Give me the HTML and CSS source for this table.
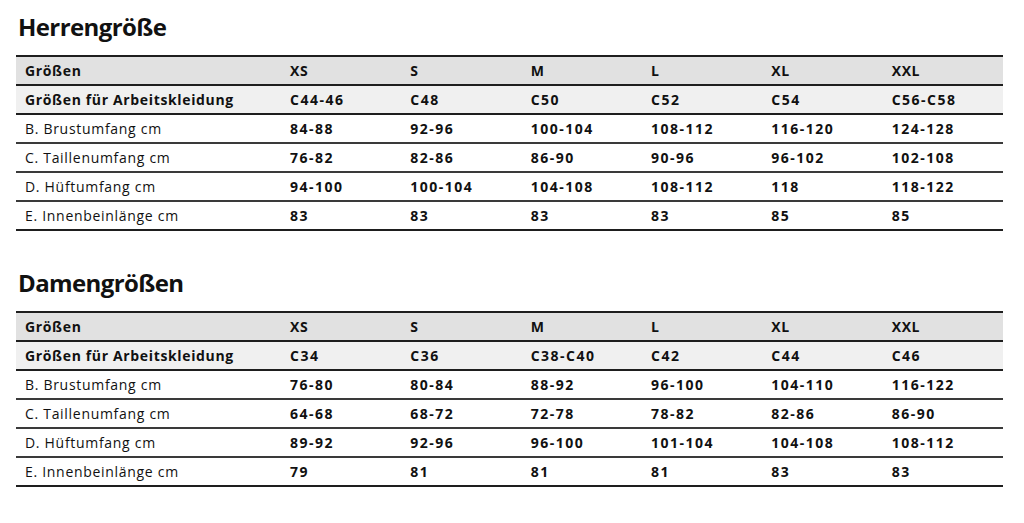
FILE: index.html
```html
<!DOCTYPE html>
<html lang="de">
<head>
<meta charset="utf-8">
<title>Größentabelle</title>
<link rel="stylesheet" href="styles.css">
</head>
<body>
<section class="block">
  <h2 class="title">Herrengröße</h2>
  <table class="sizes">
    <colgroup><col class="c-label"><col><col><col><col><col><col></colgroup>
    <tr class="r-head"><th>Größen</th><th>XS</th><th>S</th><th>M</th><th>L</th><th>XL</th><th>XXL</th></tr>
    <tr class="r-work"><th>Größen für Arbeitskleidung</th><td>C44-46</td><td>C48</td><td>C50</td><td>C52</td><td>C54</td><td>C56-C58</td></tr>
    <tr><th>B. Brustumfang cm</th><td>84-88</td><td>92-96</td><td>100-104</td><td>108-112</td><td>116-120</td><td>124-128</td></tr>
    <tr><th>C. Taillenumfang cm</th><td>76-82</td><td>82-86</td><td>86-90</td><td>90-96</td><td>96-102</td><td>102-108</td></tr>
    <tr><th>D. Hüftumfang cm</th><td>94-100</td><td>100-104</td><td>104-108</td><td>108-112</td><td>118</td><td>118-122</td></tr>
    <tr class="r-last"><th>E. Innenbeinlänge cm</th><td>83</td><td>83</td><td>83</td><td>83</td><td>85</td><td>85</td></tr>
  </table>
</section>
<section class="block block-2">
  <h2 class="title">Damengrößen</h2>
  <table class="sizes">
    <colgroup><col class="c-label"><col><col><col><col><col><col></colgroup>
    <tr class="r-head"><th>Größen</th><th>XS</th><th>S</th><th>M</th><th>L</th><th>XL</th><th>XXL</th></tr>
    <tr class="r-work"><th>Größen für Arbeitskleidung</th><td>C34</td><td>C36</td><td>C38-C40</td><td>C42</td><td>C44</td><td>C46</td></tr>
    <tr><th>B. Brustumfang cm</th><td>76-80</td><td>80-84</td><td>88-92</td><td>96-100</td><td>104-110</td><td>116-122</td></tr>
    <tr><th>C. Taillenumfang cm</th><td>64-68</td><td>68-72</td><td>72-78</td><td>78-82</td><td>82-86</td><td>86-90</td></tr>
    <tr><th>D. Hüftumfang cm</th><td>89-92</td><td>92-96</td><td>96-100</td><td>101-104</td><td>104-108</td><td>108-112</td></tr>
    <tr class="r-last"><th>E. Innenbeinlänge cm</th><td>79</td><td>81</td><td>81</td><td>81</td><td>83</td><td>83</td></tr>
  </table>
</section>
</body>
</html>
```

FILE: styles.css
```css
html, body {
  margin: 0;
  padding: 0;
  background: #ffffff;
}
body {
  font-family: "Open Sans", "Noto Sans", sans-serif;
  color: #111111;
  padding: 11px 0 0 16px;
}
.block-2 {
  margin-top: 36px;
}
.title {
  margin: 0 0 12px 2px;
  font-size: 24px;
  line-height: 32px;
  font-weight: 700;
  letter-spacing: -0.6px;
  color: #111111;
}
.sizes {
  width: 987px;
  border-collapse: collapse;
  table-layout: fixed;
  border-top: 2px solid #1e1e1e;
}
.c-label {
  width: 265px;
}
.sizes th,
.sizes td {
  height: 27px;
  padding: 0 0 0 9px;
  text-align: left;
  font-size: 14px;
  line-height: 27px;
  vertical-align: middle;
  border-bottom: 2px solid #3a3a3a;
  white-space: nowrap;
}
.sizes th {
  font-weight: 400;
  letter-spacing: 0.7px;
}
.sizes td {
  font-weight: 700;
  letter-spacing: 1.5px;
}
.r-head th,
.r-work th {
  font-weight: 700;
  letter-spacing: 0.65px;
}
.r-head th,
.r-head td {
  background: #e1e1e1;
  border-bottom-color: #1e1e1e;
}
.r-work th,
.r-work td {
  background: #f0f0f0;
  border-bottom-color: #1e1e1e;
}
.r-last th,
.r-last td {
  border-bottom-color: #1e1e1e;
}
```
